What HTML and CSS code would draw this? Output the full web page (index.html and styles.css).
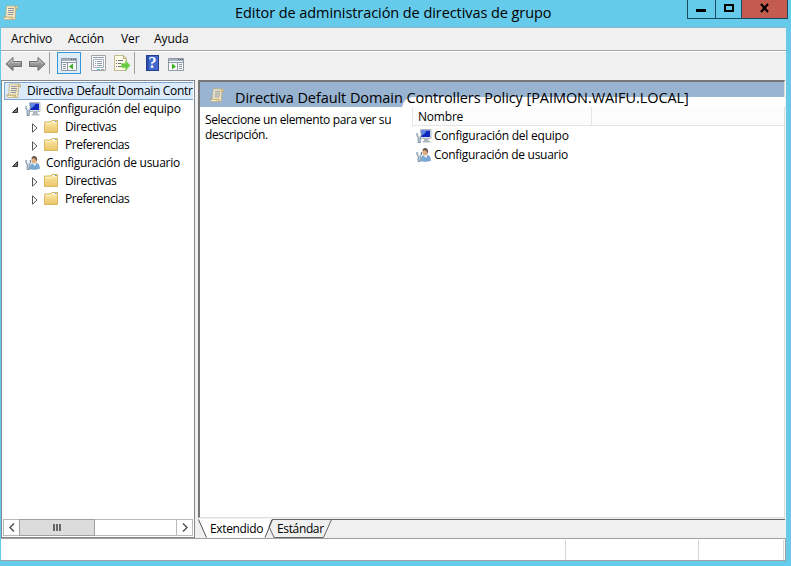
FILE: index.html
```html
<!DOCTYPE html>
<html lang="es">
<head>
<meta charset="utf-8">
<title>Editor de administración de directivas de grupo</title>
<link rel="stylesheet" href="styles.css">
</head>
<body>
<svg class="defs" width="0" height="0">
  <defs>
    <linearGradient id="paper"><stop stop-color="#fff8dc"/><stop offset="1" stop-color="#ecdcb0"/></linearGradient>
    <linearGradient id="gold" x2="0" y2="1"><stop stop-color="#fae9ab"/><stop offset="1" stop-color="#eac567"/></linearGradient>
    <linearGradient id="metal" x2="0" y2="1"><stop stop-color="#bbb"/><stop offset="1" stop-color="#777"/></linearGradient>
    <symbol id="scroll" viewBox="0 0 16 16">
      <path d="M3.500 1H13q2 0 1.800 2.500h-2L12 14.500H2q-1.500-.5-1.300-2.500h2z" fill="url(#paper)" stroke="#bdae86" stroke-width=".8"/>
      <path d="M13 1q-1.500 1-.3 2.500h2.100M.8 12h8.700q-.5 2 1 2.500" fill="#ead79f" stroke="#b09c68" stroke-width=".8"/>
      <path d="M5 3.500h6M5 5.500h6M4.700 7.500h6M4.500 9.500h5.500" stroke="#8c93a4"/>
    </symbol>
    <symbol id="computer" viewBox="0 0 16 16">
      <path d="M4.500 1.500h10.500v9H4.500z" fill="#dde1e7" stroke="#b3bac3"/>
      <path d="M5 2.500h9V9H5z" fill="#1029bb"/>
      <path d="M5 2.500h5.500Q9.500 6 5 7.500z" fill="#5d87e9"/>
      <path d="M8 11h4.500v1.500l2 1v1H6.500v-1l1.500-1z" fill="#b1b7bf"/>
      <path d="M1 5v3l1.200 1.200v5.300h2V9.200L5.500 8V5" fill="#d9e4ec" stroke="#71879b"/>
      <path d="M2.500 4.500h1.500v3H2.500z" fill="#fff"/>
    </symbol>
    <symbol id="user" viewBox="0 0 16 16">
      <path d="M5 14c0-4 1.500-6 3.500-6H10.500c2.500 0 4 2 4 5.500q-4 1.500-9.500.5z" fill="#78a9d5" stroke="#6c94be" stroke-width=".6"/>
      <path d="M7 8l3 3 1.500-3z" fill="#eef5fb"/>
      <ellipse cx="9" cy="5" rx="2.600" ry="3.500" fill="#dfad80"/>
      <path d="M6.500 3.800C6.500 0 12.500 0 12.200 5l-1 1.500c0-2.500-1.200-3.200-2.500-3.200z" fill="#655448"/>
      <path d="M1 5v3l1.200 1.200v5.300h2V9.200L5.500 8V5" fill="#d9e4ec" stroke="#71879b"/>
      <path d="M2.500 4.500h1.500v3H2.500z" fill="#fff"/>
    </symbol>
    <symbol id="folder" viewBox="0 0 16 16">
      <path d="M1.500 13.500v-10.500h6.500l1-1.500h5.500v12z" fill="url(#gold)" stroke="#d9b763"/>
      <path d="M2 4.500h6l1-1h5" fill="none" stroke="#fff3c5"/>
      <path d="M9.500 2.500h3" stroke="#fff"/><path d="M12 2.500h1.500" stroke="#4c9bd8"/>
    </symbol>
    <symbol id="arrow" viewBox="0 0 18 16">
      <path d="M1 8l7-6.500v4h8.500v5H8v4z" fill="url(#metal)" stroke="#6e6e6e"/>
      <path d="M3 8l4-4v2.500h8.500" fill="none" stroke="#c8c8c8" stroke-width=".7"/>
    </symbol>
    <symbol id="panel" viewBox="0 0 16 14">
      <path d="M.5.5h15v12H.5z" fill="#f8f9fb" stroke="#8f99a6"/>
      <path d="M1 2h14" stroke="#a6b0bd" stroke-width="2"/><path d="M10 1.500h1m1 0h1m1 0h1" stroke="#4f5e73"/>
      <path d="M1 4.500h14" stroke="#8f99a6"/>
    </symbol>
    <symbol id="closed" viewBox="0 0 10 10"><path d="M2.500 .8v8.400L7 5z" fill="#fff" stroke="#555"/></symbol>
    <symbol id="open" viewBox="0 0 10 10"><path d="M7.500 2.500v5h-5z" fill="#777" stroke="#333"/></symbol>
  </defs>
</svg>
<div class="window">
  <header class="titlebar">
    <svg class="app-icon"><use href="#scroll"/></svg>
    <h1 class="title">Editor de administración de directivas de grupo</h1>
    <div class="controls">
      <span class="control"><svg width="27" height="18"><path d="M8 10.500h10" stroke="#000" stroke-width="3"/></svg></span>
      <span class="control"><svg width="25" height="18"><path d="M9 5h8v6H9z" fill="none" stroke="#000" stroke-width="2"/></svg></span>
      <span class="control close"><svg width="45" height="18"><path d="M19 4l7 8M26 4l-7 8" stroke="#000" stroke-width="2.200"/></svg></span>
    </div>
  </header>
  <nav class="menu"><span class="m1">Archivo</span><span class="m2">Acción</span><span class="m3">Ver</span><span class="m4">Ayuda</span></nav>
  <div class="toolbar">
    <svg class="nav-arrow" width="18" height="16"><use href="#arrow"/></svg>
    <svg class="nav-arrow forward" width="18" height="16"><use href="#arrow"/></svg>
    <i class="separator"></i>
    <span class="pressed"><svg width="16" height="14"><use href="#panel"/><path d="M6.500 5v7M2 6.500h3M2 8.500h3M2 10.500h3" stroke="#8f99a6"/><path d="M12 5.500v6L8 8.500z" fill="#3daf23"/></svg></span>
    <i class="separator short"></i>
    <svg class="properties" width="16" height="17"><path d="M.5.500h14v15H.5z" fill="#f8f8f8" stroke="#a5a5a5"/><path d="M2.500 4.500h10v8h-10z" fill="#fff" stroke="#a9b3c0"/><path d="M2 2.500h11M4 6.500h1m1 0h5M4 8.500h1m1 0h5M4 10.500h1m1 0h5" stroke="#929eae"/><path d="M6 14.500h3" stroke="#40bddd"/><path d="M10 14.500h3" stroke="#aaa"/></svg>
    <svg class="export" width="17" height="17"><path d="M.5.500h9l3 3v12H.5z" fill="#fffbe6" stroke="#c5bb93"/><path d="M9.500.5v3h3" fill="none" stroke="#b8ac7a"/><path d="M2 5.500h1m1 0h5M2 8.500h1m1 0h3M2 11.500h1m1 0h3" stroke="#68737e"/><path d="M7.500 8.500h4v-3l4.500 5-4.500 5v-3h-4z" fill="#64cb3d" stroke="#8bd96b" stroke-width=".7"/></svg>
    <i class="separator"></i>
    <span class="help">?</span>
    <svg class="action-pane" width="16" height="14"><use href="#panel"/><path d="M9.500 5v7M11 6.500h3M11 8.500h3M11 10.500h3" stroke="#8f99a6"/><path d="M4 5.500v6l4-3z" fill="#3daf23"/></svg>
  </div>
  <main class="workspace">
    <aside class="sidebar">
      <div class="tree">
        <div class="root"><svg class="icon"><use href="#scroll"/></svg><span class="root-label">Directiva Default Domain Contr</span></div>
        <div class="row"><svg class="expander"><use href="#open"/></svg><svg class="icon"><use href="#computer"/></svg><span class="equipo">Configuración del equipo</span></div>
        <div class="row child"><svg class="expander"><use href="#closed"/></svg><svg class="icon"><use href="#folder"/></svg><span class="directivas">Directivas</span></div>
        <div class="row child"><svg class="expander"><use href="#closed"/></svg><svg class="icon"><use href="#folder"/></svg><span class="preferencias">Preferencias</span></div>
        <div class="row"><svg class="expander"><use href="#open"/></svg><svg class="icon"><use href="#user"/></svg><span class="usuario">Configuración de usuario</span></div>
        <div class="row child"><svg class="expander"><use href="#closed"/></svg><svg class="icon"><use href="#folder"/></svg><span class="directivas">Directivas</span></div>
        <div class="row child"><svg class="expander"><use href="#closed"/></svg><svg class="icon"><use href="#folder"/></svg><span class="preferencias">Preferencias</span></div>
      </div>
      <div class="scrollbar">
        <svg class="scroll-button" width="16" height="15"><path d="M10 3.500L6 7.500l4 4" fill="none" stroke="#555" stroke-width="1.500"/></svg>
        <div class="thumb"><i></i><i></i><i></i></div>
        <svg class="scroll-button right" width="16" height="15"><path d="M6 3.500l4 4-4 4" fill="none" stroke="#555" stroke-width="1.500"/></svg>
      </div>
    </aside>
    <section class="details">
      <div class="content">
        <div class="banner"><svg class="banner-icon" width="15" height="15"><use href="#scroll"/></svg><svg class="curve" width="383" height="10"><path d="M0 10Q2 1 10 0h373v10z" fill="#fff"/></svg><h2 class="banner-title">Directiva Default Domain Controllers Policy [PAIMON.WAIFU.LOCAL]</h2></div>
        <div class="columns">
          <p class="description">Seleccione un elemento para ver su descripción.</p>
          <div class="list">
            <div class="list-head"><span class="name-column">Nombre</span></div>
            <div class="item"><svg class="icon"><use href="#computer"/></svg><span class="equipo">Configuración del equipo</span></div>
            <div class="item"><svg class="icon"><use href="#user"/></svg><span class="usuario">Configuración de usuario</span></div>
          </div>
        </div>
      </div>
      <div class="tabs">
        <svg class="tab-shapes" width="587" height="19"><path d="M74 .5h513" stroke="#696969"/><path d="M.5 0l8 18.500h59L74 0z" fill="#fff"/><path d="M74 .5h59.500l-8 18H76l-5-11z" fill="#f0f0f0" stroke="#666"/><path d="M.5.5l8 18M67 18.500L74.500.5" stroke="#555" fill="none"/></svg>
        <span class="tab extended">Extendido</span><span class="tab standard">Estándar</span>
      </div>
    </section>
  </main>
  <footer class="status"><span></span><span></span><span></span></footer>
</div>
</body>
</html>
```
FILE: styles.css
```css
* { box-sizing: border-box; }
body { margin: 0; overflow: hidden; font: 12px "Open Sans", sans-serif; color: #000; }
svg { display: block; flex: none; }
.defs { position: absolute; }
.window { width: 791px; height: 566px; background: #66caea; padding: 0 5px 5px 1px; display: flex; flex-direction: column; }
.titlebar { height: 27px; display: flex; flex: none; position: relative; }
.app-icon { width: 16px; height: 16px; margin: 5px 0 0 2px; }
.title { margin: 0 0 0 216px; font-size: 14.5px; line-height: 26px; font-weight: 400; white-space: nowrap; letter-spacing: -.07px; }
.controls { position: absolute; right: -2px; top: 0; display: flex; height: 19px; border: 1px solid #174b60; border-top: 0; }
.control + .control { border-left: 1px solid #174b60; }
.close { background: #c45b50; }
.menu { height: 24px; flex: none; display: flex; line-height: 22px; background: #f0f0f0; border-top: 1px solid #8db5c2; border-bottom: 1px solid #a6a6a6; padding-left: 10px; white-space: nowrap; letter-spacing: -.1px; }
.m1 { width: 57px; }
.m2 { width: 53px; }
.m3 { width: 33px; }
.toolbar { height: 29px; flex: none; display: flex; background: #f0f0f0; padding-left: 4px; border-top: 1px solid #fff; }
.nav-arrow { margin: 4px 5px 0 0; }
.forward { transform: scaleX(-1); margin-right: 3px; }
.separator { width: 1px; height: 22px; background: #a0a0a0; }
.pressed { width: 24px; height: 22px; margin-left: 7px; border: 1px solid #3399db; background: #dcecf9; display: flex; padding: 5px 0 0 3px; }
.short { visibility: hidden; }
.properties { margin: 3px 0 0 9px; }
.export { margin: 3px 0 0 7px; }
.export + .separator { margin-left: 3px; }
.help { width: 13px; height: 16px; margin: 3px 0 0 11px; background: linear-gradient(90deg, #2d4fae 2px, #4468cd 2px); color: #fff; font: bold 16px/14px "Liberation Serif", serif; text-align: center; border: 1px solid #233d90; }
.action-pane { margin: 6px 0 0 9px; }
.workspace { flex: 1; min-height: 0; display: flex; background: #f0f0f0; }
.sidebar { width: 194px; border: 1px solid #828790; background: #fff; display: flex; flex-direction: column; overflow: hidden; }
.tree { flex: 1; padding: 1px 1px 0 2px; }
.root { height: 18px; display: flex; align-items: center; border: 1px solid #7da2ce; border-right: 0; background: #dbebfc; white-space: nowrap; padding-left: 1px; }
.icon { width: 16px; height: 16px; }
.root-label { margin-left: 5px; letter-spacing: -.3px; line-height: 16px; }
.row { height: 18px; display: flex; align-items: center; white-space: nowrap; padding-left: 6px; }
.row > span { margin-left: 5px; padding-bottom: 1px; }
.expander { width: 10px; height: 10px; margin: 2px 5px 0 0; }
.child { padding-left: 26px; }
.child .expander { margin-right: 3px; }
.child > span { margin-left: 6px; }
.equipo { letter-spacing: -.24px; }
.usuario { letter-spacing: -.28px; }
.directivas { letter-spacing: -.35px; }
.preferencias { letter-spacing: -.46px; }
.scrollbar { height: 17px; margin: 0 1px 1px; border: 1px solid #bababa; display: flex; background: #fff; }
.thumb { width: 76px; height: 17px; margin: -1px 0 0 -1px; border: 1px solid #a0a0a0; background: #dcdcdc; display: flex; justify-content: center; align-items: center; gap: 1px; }
.thumb i { width: 2px; height: 7px; background: #666; }
.right { margin-left: auto; border-left: 1px solid #bababa; }
.details { margin-left: 3px; width: 587px; display: flex; flex-direction: column; }
.content { height: 438px; border: 1px solid #e0e0e0; border-top: 2px solid #696969; border-left: 2px solid #777; border-top-color: #777; background: #fff; }
.banner { height: 25px; background: #99b4d1; position: relative; display: flex; }
.banner-icon { margin: 6px 0 0 10px; }
.banner-title { margin: 3px 0 0 10px; line-height: 26px; font-size: 14.5px; font-weight: 400; white-space: nowrap; position: relative; letter-spacing: -.07px; }
.curve { position: absolute; left: 202px; bottom: 0; }
.columns { display: flex; }
.description { margin: 5px 0 0 5px; width: 190px; line-height: 15px; letter-spacing: -.37px; }
.list { flex: 1; margin-left: 17px; }
.list-head { height: 19px; border-left: 1px solid #e5e5e5; border-bottom: 1px solid #e5e5e5; background: #fcfcfc; }
.name-column { display: block; width: 179px; height: 18px; line-height: 19px; padding-left: 5px; border-right: 1px solid #e5e5e5; letter-spacing: -.2px; }
.item { height: 19px; display: flex; align-items: center; padding-left: 4px; }
.item span { margin-left: 2px; }
.tabs { height: 20px; position: relative; padding-top: 1px; display: flex; letter-spacing: -.36px; }
.tab-shapes { position: absolute; left: 0; top: 1px; }
.tab { position: relative; line-height: 19px; }
.extended { margin-left: 12px; width: 67px; }
.status { height: 23px; flex: none; display: flex; background: #fff; border: 1px solid #a0a0a0; border-left: 0; padding-top: 1px; }
.status span { border-right: 1px solid #d7d7d7; width: 565px; }
.status span:nth-child(2) { width: 133px; }
.status span:nth-child(3) { width: 85px; }
```
